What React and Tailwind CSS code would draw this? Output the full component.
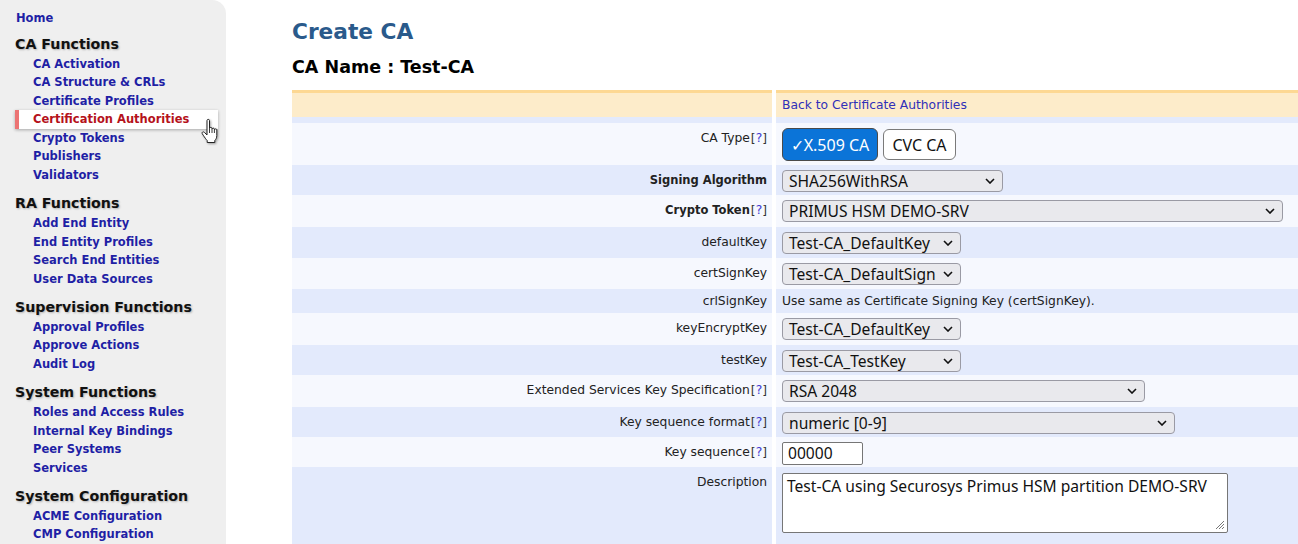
import React from 'react';

const menu = [
  {
    title: 'CA Functions',
    items: ['CA Activation', 'CA Structure & CRLs', 'Certificate Profiles', 'Certification Authorities', 'Crypto Tokens', 'Publishers', 'Validators'],
  },
  { title: 'RA Functions', items: ['Add End Entity', 'End Entity Profiles', 'Search End Entities', 'User Data Sources'] },
  { title: 'Supervision Functions', items: ['Approval Profiles', 'Approve Actions', 'Audit Log'] },
  { title: 'System Functions', items: ['Roles and Access Rules', 'Internal Key Bindings', 'Peer Systems', 'Services'] },
  { title: 'System Configuration', items: ['ACME Configuration', 'CMP Configuration'] },
];

const rows = [
  { label: 'CA Type', help: true, h: 'h-[42px]', kind: 'buttons' },
  { label: 'Signing Algorithm', bold: true, h: 'h-[30px]', kind: 'select', w: 'w-[221px]', value: 'SHA256WithRSA' },
  { label: 'Crypto Token', bold: true, help: true, h: 'h-[32px]', kind: 'select', w: 'w-[501px]', value: 'PRIMUS HSM DEMO-SRV' },
  { label: 'defaultKey', h: 'h-[31px]', kind: 'select', w: 'w-[179px]', value: 'Test-CA_DefaultKey' },
  { label: 'certSignKey', h: 'h-[31px]', kind: 'select', w: 'w-[179px]', value: 'Test-CA_DefaultSign' },
  { label: 'crlSignKey', h: 'h-[24px]', kind: 'text', value: 'Use same as Certificate Signing Key (certSignKey).' },
  { label: 'keyEncryptKey', h: 'h-[32px]', kind: 'select', w: 'w-[179px]', value: 'Test-CA_DefaultKey' },
  { label: 'testKey', h: 'h-[30px]', kind: 'select', w: 'w-[179px]', value: 'Test-CA_TestKey' },
  { label: 'Extended Services Key Specification', help: true, h: 'h-[32px]', kind: 'select', w: 'w-[363px]', value: 'RSA 2048' },
  { label: 'Key sequence format', help: true, h: 'h-[30px]', kind: 'select', w: 'w-[393px]', value: 'numeric [0-9]' },
  { label: 'Key sequence', help: true, h: 'h-[30px]', kind: 'input', value: '00000' },
  { label: 'Description', h: 'h-[80px]', kind: 'textarea', value: 'Test-CA using Securosys Primus HSM partition DEMO-SRV' },
];

function HandCursor() {
  return (
    <svg width="19" height="26" viewBox="0 0 19 26" className="absolute left-[201px] top-[118px] drop-shadow-[1px_1px_1px_rgba(0,0,0,0.35)]">
      <path
        d="M6 2.5C6 1 8.5 1 8.5 2.5V10.5C8.5 9 11 9 11 10.5V11.2C11 9.8 13.4 9.8 13.4 11.2V11.8C13.4 10.6 15.8 10.6 15.8 11.8V17.5C15.8 20 14.8 21.5 13.8 22.5V24.5H6.2V22.5C5 21.3 3.8 19.6 2.2 17.2L1.2 15.6C0.5 14.2 2.3 13.2 3.4 14.4L6 17V2.5Z"
        fill="#fff"
        stroke="#222"
        strokeWidth="1"
        strokeLinejoin="round"
      />
      <path d="M8.5 10.5V15M11 11.2V15M13.4 11.8V15" stroke="#222" strokeWidth="0.9" />
    </svg>
  );
}

function Sidebar() {
  return (
    <aside className="relative w-[226px] shrink-0 bg-[#efefef] rounded-tr-[14px] pt-[9px] font-['DejaVu_Sans',Verdana,sans-serif]">
      <div className="h-[18.5px] leading-[18.5px] pl-[16px] text-[11.5px] font-bold text-[#1f1fa5]">Home</div>
      {menu.map((sec, i) => (
        <div key={sec.title}>
          <div className={`${i === 0 ? 'mt-[5.25px]' : 'mt-[7.75px]'} h-[22px] leading-[22px] pl-[15px] text-[14.2px] font-bold text-[#111] [text-shadow:1px_1px_2px_rgba(0,0,0,0.25)]`}>
            {sec.title}
          </div>
          {sec.items.map((it) =>
            it === 'Certification Authorities' ? (
              <div key={it} className="ml-[15px] w-[203px] h-[18.5px] leading-[18.5px] bg-white shadow-[0_1px_3px_rgba(0,0,0,0.3)] border-l-[4px] border-[#ec7474] pl-[14px] text-[11.5px] font-bold text-[#b5121b]">
                {it}
              </div>
            ) : (
              <div key={it} className="h-[18.5px] leading-[18.5px] pl-[33px] text-[11.5px] font-bold text-[#1f1fa5]">
                {it}
              </div>
            )
          )}
        </div>
      ))}
      <HandCursor />
    </aside>
  );
}

function Chevron() {
  return (
    <svg width="10" height="6" viewBox="0 0 10 6">
      <path d="M1 1L5 5L9 1" fill="none" stroke="#111" strokeWidth="1.6" />
    </svg>
  );
}

function Control({ row }) {
  if (row.kind === 'buttons') {
    return (
      <div className="flex gap-[5px] pt-[5px] font-['Noto_Sans',sans-serif] text-[16px]">
        <div className="w-[96px] h-[33px] flex items-center justify-center rounded-[6px] border-[1.5px] border-[#4a4a4a] bg-[#0b74d8] text-white">
          ✓X.509 CA
        </div>
        <div className="w-[73px] h-[31px] mt-[1px] flex items-center justify-center rounded-[6px] border border-[#7a7a7a] bg-white text-[#111]">
          CVC CA
        </div>
      </div>
    );
  }
  if (row.kind === 'select') {
    return (
      <div className="pt-[5px]">
        <div className={`${row.w} h-[22px] flex items-center justify-between rounded-[4px] border border-[#9a9aa4] bg-[#e9e9ed] pl-[6px] pr-[7px] font-['Noto_Sans',sans-serif] text-[15.6px] text-[#111]`}>
          <span className="leading-[20px]">{row.value}</span>
          <Chevron />
        </div>
      </div>
    );
  }
  if (row.kind === 'text') {
    return <div className="pt-[5px] leading-[14px] text-[12.3px] text-[#222]">{row.value}</div>;
  }
  if (row.kind === 'input') {
    return (
      <div className="pt-[5px]">
        <div className="w-[81px] h-[23px] flex items-center rounded-[2px] border border-[#767676] bg-white pl-[5px] font-['Noto_Sans',sans-serif] text-[15.6px] text-[#111]">
          {row.value}
        </div>
      </div>
    );
  }
  return (
    <div className="pt-[6px]">
      <div className="relative w-[446px] h-[60px]">
        <textarea
          readOnly
          defaultValue={row.value}
          className="block w-full h-full rounded-[2px] border border-[#767676] bg-white px-[4px] py-[1px] font-['Noto_Sans',sans-serif] text-[15.6px] leading-[22px] text-[#111] resize-none"
        />
        <svg width="10" height="10" viewBox="0 0 10 10" className="absolute right-[3px] bottom-[3px]">
          <path d="M9 1L1 9M9 4L4 9M9 7L7 9" stroke="#777" strokeWidth="1" />
        </svg>
      </div>
    </div>
  );
}

function Label({ row }) {
  return (
    <div className={`${row.kind === 'text' ? 'pt-[5px]' : 'pt-[8px]'} pr-[5px] text-right leading-[14px] text-[#222] ${row.bold ? 'font-bold text-[11.5px]' : 'text-[12.3px]'}`}>
      {row.label}
      {row.help && <span className="ml-[1px] font-normal text-[12.3px] text-[#333]">[<span className="text-[#3a3ad0]">?</span>]</span>}
    </div>
  );
}

export default function App() {
  return (
    <div className="flex min-h-[544px] h-[544px] overflow-hidden bg-white font-['DejaVu_Sans',Verdana,sans-serif]">
      <Sidebar />
      <main className="flex-1 pl-[66px] pt-[19px]">
        <h1 className="h-[26px] leading-[26px] text-[21.7px] font-bold text-[#2a5a8b]">Create CA</h1>
        <h2 className="mt-[11px] h-[22px] leading-[22px] text-[17.5px] font-bold text-black">CA Name : Test-CA</h2>
        <div className="mt-[12px] grid grid-cols-[480px_522px] gap-x-[4px]">
          <div className="h-[27px] border-t-[3px] border-[#fdd893] bg-[#fdecca]" />
          <div className="h-[27px] border-t-[3px] border-[#fdd893] bg-[#fdecca] pl-[6px] pt-[5px] leading-[14px] text-[12.3px] text-[#3030b8]">
            Back to Certificate Authorities
          </div>
          <div className="h-[6px] bg-[#e3eafc]" />
          <div className="h-[6px] bg-[#e3eafc]" />
          {rows.map((row, i) => {
            const bg = i % 2 === 0 ? 'bg-[#f6f8fe]' : 'bg-[#e3eafc]';
            return (
              <React.Fragment key={row.label}>
                <div className={`${row.h} ${bg}`}>
                  <Label row={row} />
                </div>
                <div className={`${row.h} ${bg} pl-[6px]`}>
                  <Control row={row} />
                </div>
              </React.Fragment>
            );
          })}
        </div>
      </main>
    </div>
  );
}
